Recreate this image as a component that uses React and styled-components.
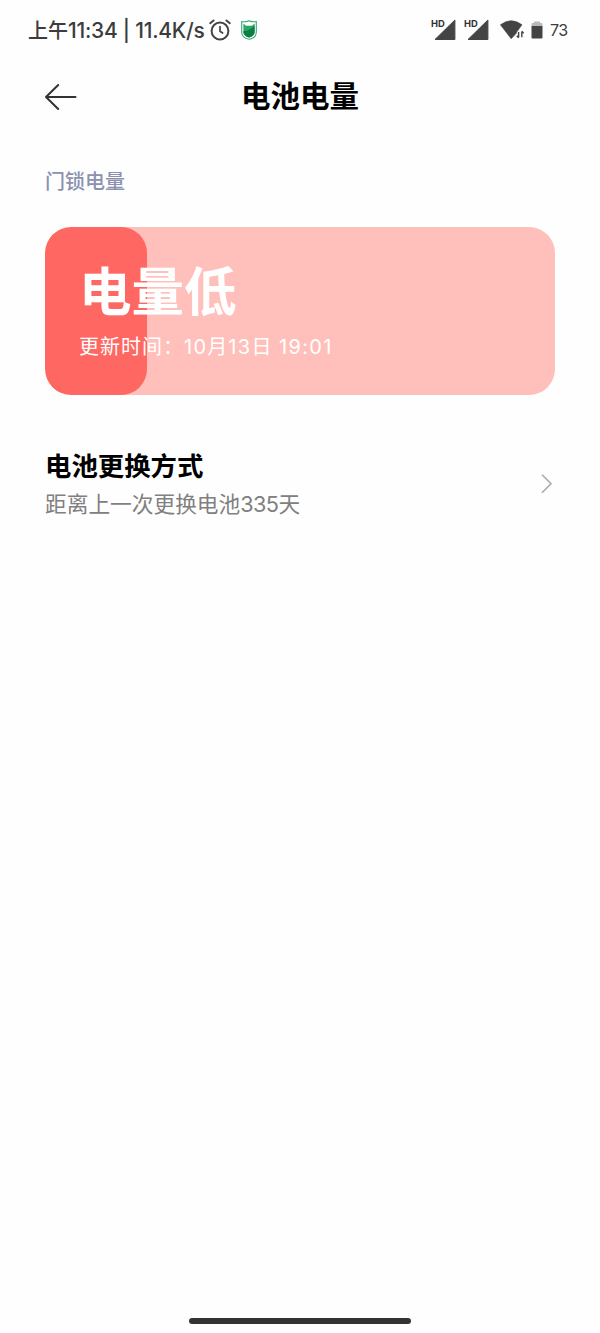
import React from 'react';
import styled, { createGlobalStyle } from 'styled-components';

const GlobalStyle = createGlobalStyle`
  * {
    box-sizing: border-box;
  }

  body {
    margin: 0;
    background: #fefefe;
    font-family: Inter, 'Noto Sans CJK SC', sans-serif;
    color: #000;
  }

  h1, h2, h3, p {
    margin: 0;
  }

  svg {
    display: block;
    flex: none;
  }
`;

const Screen = styled.div`
  display: flex;
  flex-direction: column;
  width: 600px;
  height: 1333px;
  overflow: hidden;
`;

const StatusBar = styled.header`
  display: flex;
  align-items: center;
  justify-content: space-between;
  height: 60px;
  padding: 0 32px 0 28px;
  color: #3c3c3c;
`;

const StatusGroup = styled.div`
  display: flex;
  align-items: center;
  gap: ${({ $gap }) => $gap}px;
`;

const StatusText = styled.span`
  width: 171px;
  padding-top: 1px;
  font-size: 20px;
  line-height: 30px;
  font-weight: 500;
  white-space: nowrap;
`;

const Num = styled.span`
  letter-spacing: ${({ $spacing }) => $spacing || 0}px;
  font-size: ${({ $size }) => ($size ? `${$size}px` : 'inherit')};
`;

const BatteryText = styled.span`
  width: 18px;
  font-size: 16px;
  line-height: 20px;
  letter-spacing: -0.6px;
`;

const NavBar = styled.nav`
  display: grid;
  grid-template-columns: 60px 1fr 60px;
  align-items: center;
  height: 72px;
  padding: 0 44px;
`;

const BackButton = styled.button`
  padding: 1px 0 0;
  border: 0;
  background: none;
`;

const Title = styled.h1`
  margin-top: -1px;
  font-size: 29.5px;
  line-height: 44px;
  font-weight: 700;
  text-align: center;
`;

const Content = styled.main`
  display: flex;
  flex-direction: column;
  flex: 1;
  padding: 35px 45px 0;
`;

const SectionLabel = styled.h2`
  font-size: 20px;
  line-height: 30px;
  font-weight: 500;
  color: #8b91af;
`;

const BatteryCard = styled.section`
  display: grid;
  height: 168px;
  margin-top: 30px;
  border-radius: 26px;
  background: #ffbfbb;
  overflow: hidden;

  > * {
    grid-area: 1 / 1;
  }
`;

const BatteryLevel = styled.div`
  border-radius: 26px;
  background: #ff6862;
`;

const CardBody = styled.div`
  padding: 32px 34px;
  color: #fff;
`;

const CardStatus = styled.h3`
  font-size: 52.5px;
  line-height: 66px;
  font-weight: 700;
`;

const CardTime = styled.p`
  margin-top: 7px;
  font-size: 20px;
  line-height: 30px;
  letter-spacing: 1px;
  white-space: nowrap;
`;

const ListRow = styled.a`
  display: flex;
  align-items: center;
  justify-content: space-between;
  margin-top: 52px;
`;

const RowTitle = styled.h3`
  font-size: 26.4px;
  line-height: 38px;
  font-weight: 700;
`;

const RowText = styled.p`
  font-size: 21.7px;
  line-height: 38px;
  color: #808080;
`;

const HomeIndicator = styled.div`
  align-self: center;
  width: 222px;
  height: 6px;
  margin-bottom: 9px;
  border-radius: 3px;
  background: #333;
`;

const AlarmIcon = () => (
  <svg width="22" height="22" viewBox="0 0 22 22" fill="none" stroke="#444" strokeLinecap="round">
    <circle cx="11" cy="12" r="8.4" strokeWidth="2" />
    <path d="M11 7.5V12.3L13.6 14" strokeWidth="1.7" />
    <path d="M1.2 4.2L4.6 1.4M20.8 4.2L17.4 1.4" strokeWidth="1.9" />
  </svg>
);

const ShieldIcon = () => (
  <svg width="16" height="20" viewBox="0 0 16 20">
    <path d="M.7 1.5Q4.5 2.4 8 .7Q11.5 2.4 15.3 1.5V12.5Q15 18 8 19.3Q1 18 .7 12.5Z" fill="#fff" stroke="#3fa777" strokeWidth="1.1" />
    <path d="M2.4 3.6L5 5.8H10.8L13.6 3.6V12.5Q13 16.3 8 17.4Q3 16.3 2.4 12.5Z" fill="#2ba56a" />
    <path d="M2.4 11Q7 11.8 13.6 5.8V12.5Q13 16.3 8 17.4Q3 16.3 2.4 12.5Z" fill="#0b7f43" />
  </svg>
);

const SignalIcon = () => (
  <svg width="25" height="22" viewBox="0 0 25 22">
    <path d="M23.9 1V20.5H4Z" fill="#444" stroke="#444" strokeLinejoin="round" />
    <path d="M0 0H14.5V9H0Z" fill="#fefefe" />
    <text x="0" y="8" fontFamily="Inter, sans-serif" fontSize="9.4" fontWeight="700" fill="#333">HD</text>
  </svg>
);

const WifiIcon = () => (
  <svg width="25" height="20" viewBox="0 0 25 20">
    <path d="M.4 4.8Q11.2-3.4 22 4.8L18 10.2L16.5 12.2V13L11.2 18.8Z" fill="#444" stroke="#444" strokeLinejoin="round" strokeWidth=".6" />
    <path d="M18.6 12V17.5M16.8 15.8L18.6 17.9M21.8 17.2V11.6M23.6 13.2L21.8 11.2" fill="none" stroke="#444" strokeWidth="1.4" />
  </svg>
);

const BatteryIcon = () => (
  <svg width="12" height="18" viewBox="0 0 12 18">
    <path d="M.5 5V3Q.5 2 1.5 2H3V.5H9V2H10.5Q11.5 2 11.5 3V5Z" fill="#b9b9b9" />
    <path d="M.5 5H11.5V16.5Q11.5 17.5 10.5 17.5H1.5Q.5 17.5 .5 16.5Z" fill="#444" />
  </svg>
);

const BackIcon = () => (
  <svg width="34" height="28" viewBox="0 0 34 28" fill="none" stroke="#333" strokeWidth="2" strokeLinecap="round" strokeLinejoin="round">
    <path d="M2 14H31.5M14.2 2L2 14L14.2 26" />
  </svg>
);

const ChevronIcon = () => (
  <svg width="15" height="22" viewBox="0 0 15 22" fill="none" stroke="#aaa" strokeWidth="1.6">
    <path d="M2 .7L11 9.7L2 18.7" />
  </svg>
);

const App = () => {
  const level = 20;

  return (
    <Screen>
      <GlobalStyle />
      <StatusBar>
        <StatusGroup $gap={10}>
          <StatusText>上午<Num $size={21} $spacing={-0.25}>11:34 | 11.4K/s</Num></StatusText>
          <AlarmIcon />
          <ShieldIcon />
        </StatusGroup>
        <StatusGroup $gap={11}>
          <StatusGroup $gap={8}>
            <SignalIcon />
            <SignalIcon />
          </StatusGroup>
          <StatusGroup $gap={7}>
            <StatusGroup $gap={6}>
              <WifiIcon />
              <BatteryIcon />
            </StatusGroup>
            <BatteryText>73</BatteryText>
          </StatusGroup>
        </StatusGroup>
      </StatusBar>

      <NavBar>
        <BackButton aria-label="返回">
          <BackIcon />
        </BackButton>
        <Title>电池电量</Title>
      </NavBar>

      <Content>
        <SectionLabel>门锁电量</SectionLabel>
        <BatteryCard>
          <BatteryLevel style={{ width: `${level}%` }} />
          <CardBody>
            <CardStatus>电量低</CardStatus>
            <CardTime>
              更新时间：<Num $spacing={1.3}>10</Num>月<Num $spacing={1.3}>13</Num>日 <Num $spacing={1.3}>19:01</Num>
            </CardTime>
          </CardBody>
        </BatteryCard>

        <ListRow>
          <div>
            <RowTitle>电池更换方式</RowTitle>
            <RowText>距离上一次更换电池<Num $spacing={-0.6}>335</Num>天</RowText>
          </div>
          <ChevronIcon />
        </ListRow>
      </Content>
      <HomeIndicator />
    </Screen>
  );
};

export default App;
